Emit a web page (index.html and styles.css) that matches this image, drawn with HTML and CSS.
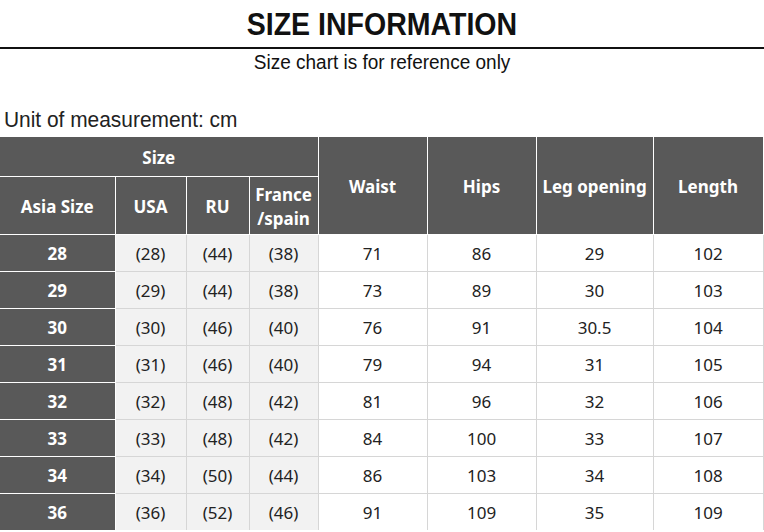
FILE: index.html
```html
<!DOCTYPE html>
<html>
<head>
<meta charset="utf-8">
<link rel="stylesheet" href="styles.css">
</head>
<body>
<div class="page">
  <h1 class="title"><span class="narrow">SIZE INFORMATION</span></h1>
  <p class="subtitle"><span class="narrow-s">Size chart is for reference only</span></p>
  <p class="unit"><span class="narrow-u">Unit of measurement: cm</span></p>
  <table class="chart">
    <colgroup>
      <col class="c1"><col class="c2"><col class="c3"><col class="c4">
      <col class="c5"><col class="c6"><col class="c7"><col class="c8">
    </colgroup>
    <thead>
      <tr class="h1">
        <th colspan="4">Size</th>
        <th rowspan="2">Waist</th>
        <th rowspan="2">Hips</th>
        <th rowspan="2">Leg opening</th>
        <th rowspan="2">Length</th>
      </tr>
      <tr class="h2">
        <th>Asia Size</th>
        <th>USA</th>
        <th>RU</th>
        <th class="fr">France<br>/spain</th>
      </tr>
    </thead>
    <tbody>
      <tr><th>28</th><td class="g">(28)</td><td class="g">(44)</td><td class="g">(38)</td><td>71</td><td>86</td><td>29</td><td>102</td></tr>
      <tr><th>29</th><td class="g">(29)</td><td class="g">(44)</td><td class="g">(38)</td><td>73</td><td>89</td><td>30</td><td>103</td></tr>
      <tr><th>30</th><td class="g">(30)</td><td class="g">(46)</td><td class="g">(40)</td><td>76</td><td>91</td><td>30.5</td><td>104</td></tr>
      <tr><th>31</th><td class="g">(31)</td><td class="g">(46)</td><td class="g">(40)</td><td>79</td><td>94</td><td>31</td><td>105</td></tr>
      <tr><th>32</th><td class="g">(32)</td><td class="g">(48)</td><td class="g">(42)</td><td>81</td><td>96</td><td>32</td><td>106</td></tr>
      <tr><th>33</th><td class="g">(33)</td><td class="g">(48)</td><td class="g">(42)</td><td>84</td><td>100</td><td>33</td><td>107</td></tr>
      <tr><th>34</th><td class="g">(34)</td><td class="g">(50)</td><td class="g">(44)</td><td>86</td><td>103</td><td>34</td><td>108</td></tr>
      <tr><th>36</th><td class="g">(36)</td><td class="g">(52)</td><td class="g">(46)</td><td>91</td><td>109</td><td>35</td><td>109</td></tr>
    </tbody>
  </table>
</div>
</body>
</html>
```
FILE: styles.css
```css
html, body {
  margin: 0;
  padding: 0;
  background: #ffffff;
}
.page {
  width: 764px;
  height: 532px;
  overflow: hidden;
}
.title {
  margin: 0;
  height: 45px;
  padding-top: 2px;
  line-height: 45px;
  text-align: center;
  font-family: "Liberation Sans", Arial, sans-serif;
  font-weight: bold;
  font-size: 31px;
  color: #111;
  border-bottom: 2px solid #111;
}
.narrow {
  display: inline-block;
  transform: scaleX(0.92);
}
.subtitle {
  margin: 0;
  height: 26px;
  line-height: 26px;
  text-align: center;
  font-family: "Liberation Sans", Arial, sans-serif;
  font-size: 20px;
  color: #111;
}
.narrow-s {
  display: inline-block;
  transform: scaleX(0.95);
}
.unit {
  margin: 31px 0 0 0;
  height: 28px;
  line-height: 28px;
  padding-left: 4px;
  font-family: "Liberation Sans", Arial, sans-serif;
  font-size: 22px;
  color: #222;
}
.narrow-u {
  display: inline-block;
  transform: scaleX(0.95);
  transform-origin: left center;
}
.chart {
  margin-top: 3px;
  border-collapse: collapse;
  table-layout: fixed;
  width: 763px;
  font-family: "Noto Sans", "Open Sans", sans-serif;
  font-size: 17px;
}
.c1 { width: 115px; }
.c2 { width: 71px; }
.c3 { width: 63px; }
.c4 { width: 69px; }
.c5 { width: 109px; }
.c6 { width: 109px; }
.c7 { width: 117px; }
.c8 { width: 110px; }
.chart th {
  background: #595959;
  color: #ffffff;
  font-weight: bold;
  border: 1px solid #ffffff;
  padding: 2px 0 0 0;
  text-align: center;
}
.chart thead tr:first-child th {
  border-top: none;
}
.chart th:first-child {
  border-left: none;
}
.h1 th {
  height: 37px;
}
.h2 th {
  height: 55px;
}
.fr {
  line-height: 24px;
}
.chart tbody th {
  height: 35px;
  padding: 1px 0 0 0;
  font-size: 17px;
}
.chart td {
  height: 35px;
  padding: 1px 0 0 0;
  text-align: center;
  color: #222;
  border: 1px solid #d6d6d6;
  background: #ffffff;
}
.chart td.g {
  background: #f2f2f2;
}
.chart tbody tr:last-child th,
.chart tbody tr:last-child td {
  border-bottom: none;
}
```
